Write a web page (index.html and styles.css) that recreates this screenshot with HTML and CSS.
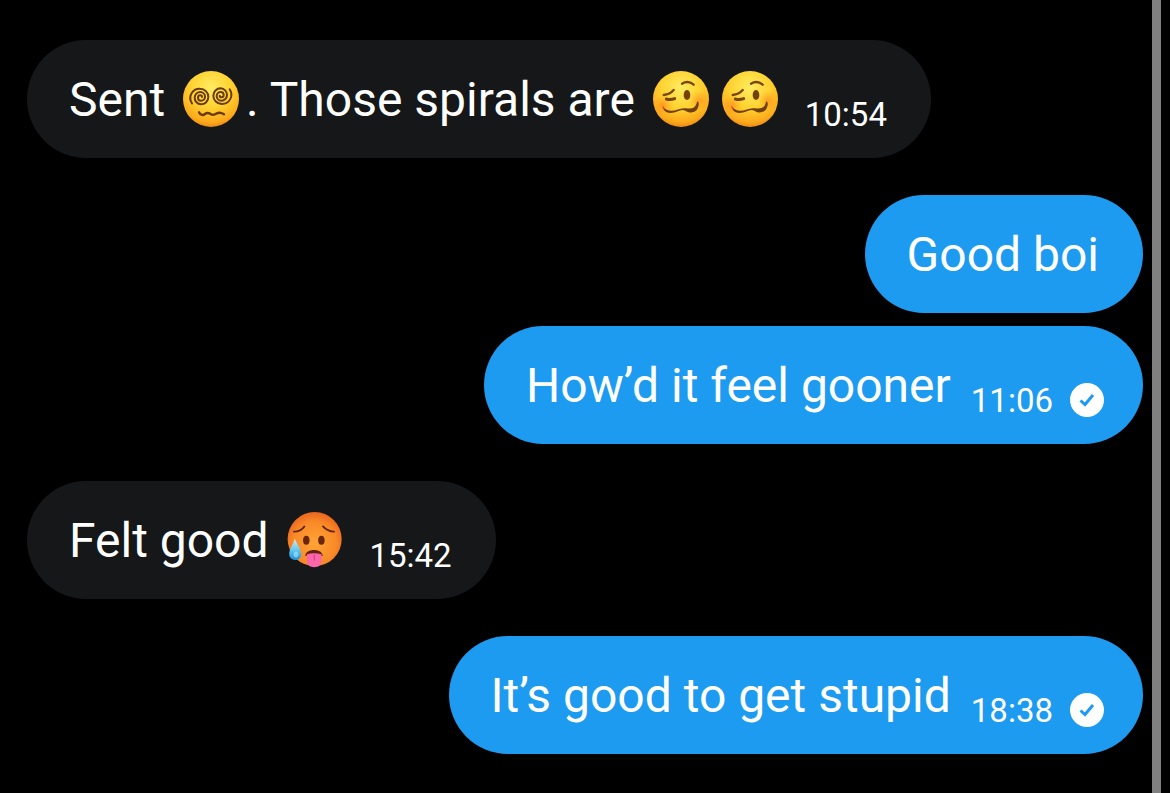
FILE: index.html
```
<!DOCTYPE html>
<html lang="en">
<head>
<meta charset="utf-8">
<meta name="viewport" content="width=device-width, initial-scale=1">
<title>Messages</title>
<link rel="stylesheet" href="styles.css">
</head>
<body>
<svg class="defs" aria-hidden="true">
  <defs>
    <radialGradient id="yellow" cx="50%" cy="30%" r="72%">
      <stop offset="0" stop-color="#ffec62"/>
      <stop offset=".5" stop-color="#ffd230"/>
      <stop offset=".85" stop-color="#fcaa1c"/>
      <stop offset="1" stop-color="#e98412"/>
    </radialGradient>
    <radialGradient id="orange" cx="50%" cy="58%" r="66%">
      <stop offset="0" stop-color="#ffa436"/>
      <stop offset=".6" stop-color="#f98a28"/>
      <stop offset="1" stop-color="#e4551a"/>
    </radialGradient>
    <radialGradient id="blush">
      <stop offset="0" stop-color="#ff6a16" stop-opacity=".45"/>
      <stop offset="1" stop-color="#ff7a16" stop-opacity="0"/>
    </radialGradient>
    <linearGradient id="drop" x1="0" y1="0" x2="0" y2="1">
      <stop offset="0" stop-color="#d3f2fa"/>
      <stop offset=".55" stop-color="#62c5f0"/>
      <stop offset="1" stop-color="#1e8fdb"/>
    </linearGradient>
    <symbol id="dizzy" viewBox="0 0 168 168">
      <circle cx="84" cy="84" r="84" fill="url(#yellow)"/>
      <g fill="none" stroke="#6b3a08" stroke-width="6" stroke-linecap="round">
        <path id="spiral" d="M27 97A28 28 0 0 1 51 53A25 25 0 0 1 76 78A22 22 0 0 1 54 100A20 20 0 0 1 35 80A17 17 0 0 1 52 63A14 14 0 0 1 66 77A12 12 0 0 1 54 89A9 9 0 0 1 45 80A7 7 0 0 1 52 73A5 5 0 0 1 57 78"/>
        <use href="#spiral" transform="rotate(180 83.500 76)"/>
        <path stroke-width="7" d="M48 124C53 133 60 134 66 129C72 124 78 126 84 130C90 134 96 131 102 127C110 123 115 125 123 130"/>
      </g>
    </symbol>
    <symbol id="woozy" viewBox="0 0 168 168">
      <circle cx="84" cy="84" r="84" fill="url(#yellow)"/>
      <circle cx="30" cy="102" r="30" fill="url(#blush)"/>
      <circle cx="138" cy="88" r="30" fill="url(#blush)"/>
      <g fill="none" stroke="#7a4708" stroke-linecap="round" stroke-linejoin="round">
        <path stroke-width="7" d="M32 72Q51 70 62 57M87 38Q105 27 122 41"/>
        <path stroke-width="9" d="M40 84Q52 88 65 83"/>
      </g>
      <ellipse cx="102" cy="72" rx="10" ry="15" fill="#754205"/>
      <path fill="#70400a" d="M29 106Q36 118 52 119C71 120 81 109 99 112C119 115 129 109 132 92Q138 90 137 102C134 126 111 129 97 119C82 112 72 127 50 126Q31 124 29 106Z"/>
      <path fill="none" stroke="#d84b1a" stroke-width="4" stroke-linecap="round" d="M30 108L33 113"/>
    </symbol>
    <symbol id="hot" viewBox="0 0 168 174">
      <circle cx="86" cy="84" r="84" fill="url(#orange)"/>
      <g fill="none" stroke="#65270a" stroke-width="6" stroke-linecap="round">
        <path d="M22 61Q43 61 54 45M112 45Q126 61 146 61"/>
      </g>
      <ellipse cx="60" cy="88" rx="10" ry="14" fill="#69260b"/>
      <ellipse cx="107" cy="88" rx="10" ry="14" fill="#69260b"/>
      <path fill="#64220b" d="M57 137C57 112 111 112 111 137Q84 128 57 137Z"/>
      <path fill="#fa65ac" d="M62 131Q84 125 107 131V151Q106 172 85 172Q63 172 62 151Z"/>
      <path fill="none" stroke="#df438d" stroke-width="4" stroke-linecap="round" d="M85 134V149"/>
      <path fill="url(#drop)" d="M24 83C33 102 44 117 44 131C44 143 36 149 26 149C14 149 7 141 7 130C7 115 20 102 24 83Z"/>
      <ellipse cx="28" cy="132" rx="7" ry="9" fill="#b6edfa" opacity=".55"/>
    </symbol>
    <symbol id="delivered" viewBox="0 0 34 34">
      <circle cx="17" cy="17" r="17" fill="#fff"/>
      <path fill="none" stroke="#1d9bf0" stroke-width="3" d="M10.500 17.500L15 21.500L23 12"/>
    </symbol>
  </defs>
</svg>
<div class="screen">
  <main class="chat">
    <section class="group received">
      <div class="bubble">
        <p class="text">Sent <svg class="emoji" role="img" aria-label="Face with spiral eyes"><use href="#dizzy"/></svg>. Those spirals are <svg class="emoji" role="img" aria-label="Woozy face"><use href="#woozy"/></svg><svg class="emoji" role="img" aria-label="Woozy face"><use href="#woozy"/></svg></p>
        <time class="time">10:54</time>
      </div>
    </section>
    <section class="group sent">
      <div class="bubble"><p class="text">Good boi</p></div>
      <div class="bubble with-status">
        <p class="text">How’d it feel gooner</p>
        <time class="time">11:06</time>
        <svg class="status" role="img" aria-label="Delivered"><use href="#delivered"/></svg>
      </div>
    </section>
    <section class="group received">
      <div class="bubble">
        <p class="text">Felt good <svg class="emoji" role="img" aria-label="Hot face"><use href="#hot"/></svg></p>
        <time class="time">15:42</time>
      </div>
    </section>
    <section class="group sent">
      <div class="bubble with-status">
        <p class="text">It’s good to get stupid</p>
        <time class="time">18:38</time>
        <svg class="status" role="img" aria-label="Delivered"><use href="#delivered"/></svg>
      </div>
    </section>
  </main>
  <div class="rail"></div>
</div>
</body>
</html>
```
FILE: styles.css
```
* { box-sizing: border-box; }
body {
  margin: 0;
  background: #000;
  color: #fff;
  font-family: Roboto, "Liberation Sans", sans-serif;
}
.defs { position: absolute; width: 0; height: 0; }
.screen { display: flex; min-height: 100vh; }
.chat {
  flex: 1;
  display: flex;
  flex-direction: column;
  gap: 37px;
  padding: 40px 9px 39px 27px;
}
.rail { width: 9px; margin-right: 9px; background: #808080; }
.group { display: flex; flex-direction: column; gap: 13px; }
.received { align-items: flex-start; }
.sent { align-items: flex-end; }
.bubble {
  display: flex;
  align-items: flex-end;
  padding: 31px 44px 29px 42px;
  border-radius: 59px;
}
.received .bubble { background: #151719; }
.sent .bubble { background: #1d9bf0; }
.sent .with-status { padding-right: 39px; }
.text { margin: 0; font-size: 48px; line-height: 58px; }
.emoji {
  width: 56px;
  height: 56px;
  margin: -8px 7px -8px 6px;
  vertical-align: -3px;
}
.time { margin: 0 0 -6px 20px; font-size: 33px; line-height: 40px; }
.status { width: 34px; height: 34px; margin: 0 0 -2px 17px; }
```
